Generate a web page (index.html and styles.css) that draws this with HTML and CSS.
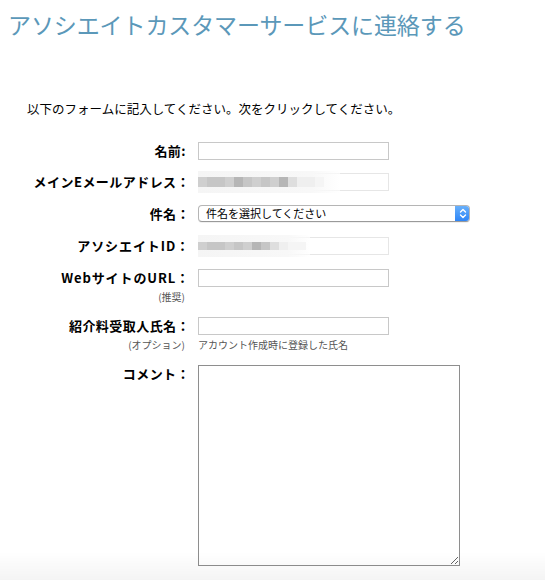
FILE: index.html
```html
<!DOCTYPE html>
<html lang="ja">
<head>
<meta charset="utf-8">
<title>アソシエイトカスタマーサービスに連絡する</title>
<link rel="stylesheet" href="styles.css">
</head>
<body>
<h1 class="title">アソシエイトカスタマーサービスに連絡する</h1>
<p class="intro">以下のフォームに記入してください。次をクリックしてください。</p>
<form class="form">
  <div class="row r-name">
    <label class="lbl">名前:</label>
    <div class="field"><input class="txt" type="text"></div>
  </div>
  <div class="row r-email">
    <label class="lbl">メインEメールアドレス：</label>
    <div class="field">
      <input class="txt" type="text">
      <div class="mosaic m-email">
        <span class="c s3"></span><span class="c s2"></span><span class="c s2"></span><span class="c s3"></span><span class="c s1"></span><span class="c s2"></span><span class="c s3"></span><span class="c s2"></span><span class="c s3"></span><span class="c s1"></span><span class="c s4"></span><span class="c s5"></span><span class="c s5"></span><span class="c s6"></span>
      </div>
    </div>
  </div>
  <div class="row r-subject">
    <label class="lbl">件名：</label>
    <div class="field">
      <div class="select">
        <span class="sel-text">件名を選択してください</span>
        <span class="sel-btn">
          <svg width="8" height="11" viewBox="0 0 8 11"><path d="M1.5 4 L4 1.5 L6.5 4 M1.5 7 L4 9.5 L6.5 7" fill="none" stroke="#fff" stroke-width="1.4" stroke-linecap="round" stroke-linejoin="round"/></svg>
        </span>
      </div>
    </div>
  </div>
  <div class="row r-id">
    <label class="lbl">アソシエイトID：</label>
    <div class="field">
      <input class="txt" type="text">
      <div class="mosaic m-id">
        <span class="c s3"></span><span class="c s2"></span><span class="c s2"></span><span class="c s3"></span><span class="c s2"></span><span class="c s3"></span><span class="c s1"></span><span class="c s2"></span><span class="c s4"></span><span class="c s5"></span><span class="c s6"></span><span class="c s6"></span>
      </div>
    </div>
  </div>
  <div class="row r-url">
    <div class="lblcol">
      <label class="lbl">WebサイトのURL：</label>
      <span class="note">(推奨)</span>
    </div>
    <div class="field"><input class="txt" type="text"></div>
  </div>
  <div class="row r-ref">
    <div class="lblcol">
      <label class="lbl">紹介料受取人氏名：</label>
      <span class="note">(オプション)</span>
    </div>
    <div class="field">
      <input class="txt" type="text">
      <span class="help">アカウント作成時に登録した氏名</span>
    </div>
  </div>
  <div class="row r-comment">
    <label class="lbl">コメント：</label>
    <div class="field"><textarea class="area"></textarea></div>
  </div>
</form>
<div class="fade"></div>
</body>
</html>
```
FILE: styles.css
```css
html {
  background: #fff;
}
body {
  margin: 0;
  font-family: "Noto Sans CJK JP", "Noto Sans", sans-serif;
  color: #000;
  width: 545px;
  height: 580px;
  overflow: hidden;
}
.title {
  margin: 9px 0 0 8px;
  font-size: 23px;
  line-height: 30px;
  font-weight: 400;
  color: #5b98b9;
  letter-spacing: -0.1px;
  white-space: nowrap;
}
.intro {
  margin: 62px 0 0 27px;
  font-size: 12.5px;
  line-height: 16px;
}
.form {
  margin-top: 25px;
}
.row {
  display: grid;
  grid-template-columns: 190px 272px;
  column-gap: 8px;
  align-items: start;
}
.r-email { margin-top: 13px; }
.r-subject { margin-top: 14px; }
.r-id { margin-top: 14px; }
.r-url { margin-top: 14px; }
.r-ref { margin-top: 13px; }
.r-comment { margin-top: 13px; }
.lblcol {
  display: flex;
  flex-direction: column;
  align-items: flex-end;
}
.lbl {
  display: block;
  text-align: right;
  font-size: 13px;
  font-weight: 700;
  line-height: 18px;
  letter-spacing: 0.45px;
  white-space: nowrap;
}
.r-name .lbl { padding-right: 4px; }
.r-id .lbl, .r-url .lbl { letter-spacing: 0.9px; }
.note {
  font-size: 10px;
  line-height: 14px;
  color: #555;
  margin-top: 3px;
  padding-right: 5px;
}
.field {
  position: relative;
  display: flex;
  flex-direction: column;
  align-items: flex-start;
}
.txt {
  box-sizing: border-box;
  width: 191px;
  height: 18px;
  margin: 0;
  padding: 0 3px;
  border: 1px solid #c8c8c8;
  background: #fff;
  font-size: 11px;
}
.r-email .txt, .r-id .txt {
  border-color: #e6e6e6;
}
.help {
  font-size: 10px;
  line-height: 14px;
  color: #555;
  margin-top: 3px;
}
.mosaic {
  position: absolute;
  left: 0;
  top: -2px;
  height: 22px;
  display: flex;
  align-items: center;
  background: linear-gradient(to right, #f5f5f5 0, #f8f8f8 80%, rgba(255,255,255,0.6) 100%);
}
.m-email { width: 142px; }
.m-id { width: 112px; }
.c {
  width: 9px;
  height: 10px;
}
.m-id .c { height: 8px; }
.s1 { background: #b6b6b6; }
.s2 { background: #c6c6c6; }
.s3 { background: #cfcfcf; }
.s4 { background: #dedede; }
.s5 { background: #efefef; }
.s6 { background: #f5f5f5; }
.select {
  box-sizing: border-box;
  width: 272px;
  height: 17px;
  border: 1px solid #b5b5b5;
  border-bottom-color: #9a9a9a;
  border-radius: 4px;
  background: #fff;
  display: flex;
  align-items: center;
  justify-content: space-between;
  overflow: hidden;
  box-shadow: 0 1px 0 rgba(0,0,0,0.06);
}
.sel-text {
  padding-left: 7px;
  font-size: 11px;
  line-height: 15px;
}
.sel-btn {
  width: 15px;
  height: 17px;
  margin: -1px -1px -1px 0;
  border-radius: 0 4px 4px 0;
  background: linear-gradient(to bottom, #6cb3fb, #2a82f6);
  display: flex;
  align-items: center;
  justify-content: center;
}
.sel-btn svg { display: block; }
.area {
  box-sizing: border-box;
  width: 262px;
  height: 201px;
  margin: 0;
  border: 1px solid #8e8e8e;
  resize: both;
  background: #fff;
}
.fade {
  position: fixed;
  left: 0;
  right: 0;
  bottom: 0;
  height: 28px;
  pointer-events: none;
  background: linear-gradient(to bottom, rgba(0,0,0,0), rgba(0,0,0,0.045));
}
```
